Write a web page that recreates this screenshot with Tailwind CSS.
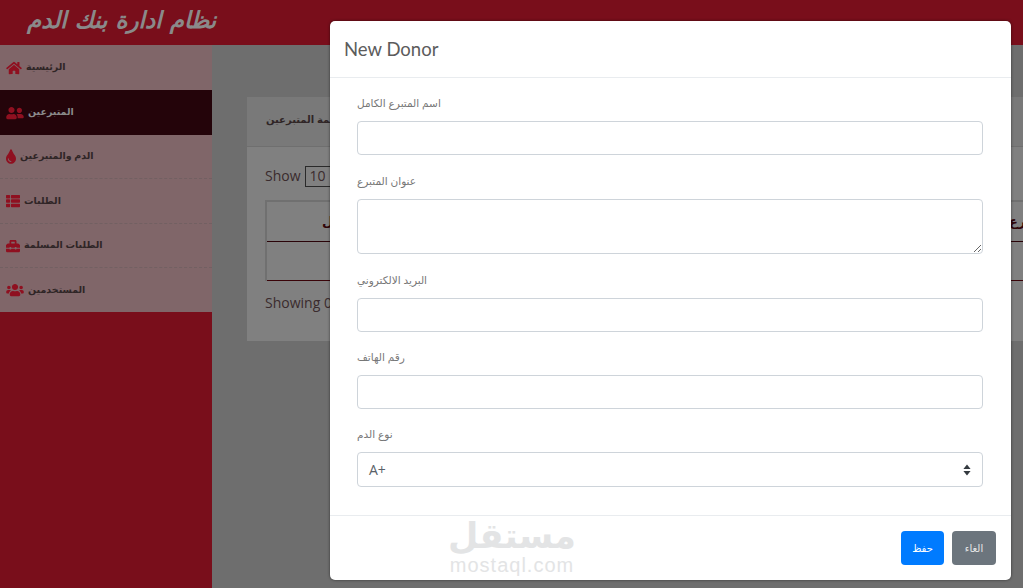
<!doctype html>
<html lang="ar">
<head>
<meta charset="utf-8">
<script src="https://cdn.jsdelivr.net/npm/@tailwindcss/browser@4"></script>
<title>نظام ادارة بنك الدم</title>
</head>
<body class="m-0">
<div class="relative w-[1023px] h-[588px] overflow-hidden bg-[#6e6e6e] font-['Open_Sans','DejaVu_Sans',sans-serif]">
  <header class="h-[45px] bg-[#790e1b] pl-[27px] flex items-center">
    <h1 class="text-[23px] leading-[40px] font-bold italic text-[#8a8a8a] font-['DejaVu_Sans',sans-serif] mb-[6px]" dir="rtl">نظام ادارة بنك الدم</h1>
  </header>
  <div class="flex h-[543px]">
    <aside class="w-[212px] shrink-0 bg-[#790e1b] self-stretch">
      <nav class="text-[9.5px] font-bold text-[#2f2526] font-['Liberation_Sans','DejaVu_Sans',sans-serif]">
        <a class="h-[45px] bg-[#806669] flex items-center gap-[4px] pl-[6px]">
          <svg class="w-[16px] h-[14px] fill-[#8f1020]" viewBox="0 0 576 512"><path d="M280.37 148.26L96 300.11V464a16 16 0 0 0 16 16l112.06-.29a16 16 0 0 0 15.92-16V368a16 16 0 0 1 16-16h64a16 16 0 0 1 16 16v95.64a16 16 0 0 0 16 16.05L464 480a16 16 0 0 0 16-16V300L295.67 148.26a12.19 12.19 0 0 0-15.3 0zM571.6 251.47L488 182.56V44.05a12 12 0 0 0-12-12h-56a12 12 0 0 0-12 12v72.61L318.47 43a48 48 0 0 0-61 0L4.34 251.47a12 12 0 0 0-1.6 16.9l25.5 31A12 12 0 0 0 45.15 301l235.22-193.74a12.19 12.19 0 0 1 15.3 0L530.9 301a12 12 0 0 0 16.9-1.6l25.5-31a12 12 0 0 0-1.7-16.93z"/></svg>
          <span dir="rtl">الرئيسية</span>
        </a>
        <a class="h-[45px] bg-[#24040a] text-[#8a8a8a] flex items-center gap-[4px] pl-[6px]">
          <svg class="w-[18px] h-[14px] fill-[#8f1020]" viewBox="0 0 640 512"><path d="M192 256c61.9 0 112-50.1 112-112S253.9 32 192 32 80 82.1 80 144s50.1 112 112 112zm76.8 32h-8.3c-20.8 10-43.9 16-68.5 16s-47.6-6-68.5-16h-8.3C51.6 288 0 339.6 0 403.2V432c0 26.5 21.5 48 48 48h288c26.5 0 48-21.5 48-48v-28.8c0-63.6-51.6-115.2-115.2-115.2zM480 256c53 0 96-43 96-96s-43-96-96-96-96 43-96 96 43 96 96 96zm48 32h-3.8c-13.9 4.8-28.6 8-44.2 8s-30.3-3.2-44.2-8H432c-20.4 0-39.2 5.9-55.7 15.4 24.4 26.3 39.7 61.2 39.7 99.8v38.4c0 2.2-.5 4.3-.6 6.4H592c26.5 0 48-21.5 48-48 0-61.9-50.1-112-112-112z"/></svg>
          <span dir="rtl">المتبرعين</span>
        </a>
        <a class="h-[44px] bg-[#806669] border-b border-dashed border-[#726062] flex items-center gap-[4px] pl-[6px]">
          <svg class="w-[10px] h-[15px] fill-[#8f1020]" viewBox="0 0 352 512"><path d="M205.22 22.09c-7.94-28.78-49.44-30.12-58.44 0C100.01 179.85 0 222.72 0 333.91 0 432.35 78.72 512 176 512s176-79.65 176-178.09c0-111.75-99.79-153.34-146.78-311.82zM176 448c-61.75 0-112-50.25-112-112 0-8.84 7.16-16 16-16s16 7.16 16 16c0 44.11 35.89 80 80 80 8.84 0 16 7.16 16 16s-7.16 16-16 16z"/></svg>
          <span dir="rtl">الدم والمتبرعين</span>
        </a>
        <a class="h-[45px] bg-[#806669] border-b border-dashed border-[#726062] flex items-center gap-[4px] pl-[6px]">
          <svg class="w-[14px] h-[14px] fill-[#8f1020]" viewBox="0 0 512 512"><path d="M149.333 216v80c0 13.255-10.745 24-24 24H24c-13.255 0-24-10.745-24-24v-80c0-13.255 10.745-24 24-24h101.333c13.255 0 24 10.745 24 24zM0 376v80c0 13.255 10.745 24 24 24h101.333c13.255 0 24-10.745 24-24v-80c0-13.255-10.745-24-24-24H24c-13.255 0-24 10.745-24 24zM125.333 32H24C10.745 32 0 42.745 0 56v80c0 13.255 10.745 24 24 24h101.333c13.255 0 24-10.745 24-24V56c0-13.255-10.745-24-24-24H24zm80 448H488c13.255 0 24-10.745 24-24v-80c0-13.255-10.745-24-24-24H205.333c-13.255 0-24 10.745-24 24v80c0 13.255 10.745 24 24 24zm-24-424v80c0 13.255 10.745 24 24 24H488c13.255 0 24-10.745 24-24V56c0-13.255-10.745-24-24-24H205.333c-13.255 0-24 10.745-24 24zm24 264H488c13.255 0 24-10.745 24-24v-80c0-13.255-10.745-24-24-24H205.333c-13.255 0-24 10.745-24 24v80c0 13.255 10.745 24 24 24z"/></svg>
          <span dir="rtl">الطلبات</span>
        </a>
        <a class="h-[44px] bg-[#806669] border-b border-dashed border-[#726062] flex items-center gap-[4px] pl-[6px]">
          <svg class="w-[14px] h-[14px] fill-[#8f1020]" viewBox="0 0 512 512"><path d="M502.63 214.63l-45.25-45.25c-6-6-14.14-9.37-22.63-9.37H384V80c0-26.51-21.49-48-48-48H176c-26.51 0-48 21.49-48 48v80H77.25c-8.49 0-16.62 3.37-22.63 9.37L9.37 214.63c-6 6-9.37 14.14-9.37 22.63V320h128v-16c0-8.84 7.16-16 16-16h32c8.84 0 16 7.16 16 16v16h128v-16c0-8.84 7.16-16 16-16h32c8.84 0 16 7.16 16 16v16h128v-82.75c0-8.48-3.37-16.62-9.37-22.62zM320 160H192V96h128v64zm64 208c0 8.84-7.16 16-16 16h-32c-8.84 0-16-7.16-16-16v-16H192v16c0 8.84-7.16 16-16 16h-32c-8.84 0-16-7.16-16-16v-16H0v96c0 17.67 14.33 32 32 32h448c17.67 0 32-14.33 32-32v-96H384v16z"/></svg>
          <span dir="rtl">الطلبات المسلمة</span>
        </a>
        <a class="h-[44px] bg-[#806669] flex items-center gap-[4px] pl-[6px]">
          <svg class="w-[18px] h-[14px] fill-[#8f1020]" viewBox="0 0 640 512"><path d="M96 224c35.3 0 64-28.7 64-64s-28.7-64-64-64-64 28.7-64 64 28.7 64 64 64zm448 0c35.3 0 64-28.7 64-64s-28.7-64-64-64-64 28.7-64 64 28.7 64 64 64zm32 32h-64c-17.6 0-33.5 7.1-45.1 18.6 40.3 22.1 68.9 62 75.1 109.4h66c17.7 0 32-14.3 32-32v-32c0-35.3-28.7-64-64-64zm-256 0c61.9 0 112-50.1 112-112S381.9 32 320 32 208 82.1 208 144s50.1 112 112 112zm76.8 32h-8.3c-20.8 10-43.9 16-68.5 16s-47.6-6-68.5-16h-8.3C179.6 288 128 339.6 128 403.2V432c0 26.5 21.5 48 48 48h288c26.5 0 48-21.5 48-48v-28.8c0-63.6-51.6-115.2-115.2-115.2zm-223.7-13.4C161.5 263.1 145.6 256 128 256H64c-35.3 0-64 28.7-64 64v32c0 17.7 14.3 32 32 32h65.9c6.3-47.4 34.9-87.3 75.2-109.4z"/></svg>
          <span dir="rtl">المستخدمين</span>
        </a>
      </nav>
    </aside>
    <main class="flex-1 min-w-0 pl-[35px] pt-[52px]">
      <section class="w-[800px] h-[244px] bg-[#808080] rounded-tl-[3px] text-[#3a2b2d] text-[14px]">
        <div class="h-[50px] bg-[#797979] border-b border-[#6f6f6f] pl-[19px] pb-[4px] flex items-center whitespace-nowrap">
          <span class="text-[10px] font-bold text-[#2f2526] font-['Liberation_Sans','DejaVu_Sans',sans-serif]" dir="rtl">قائمة المتبرعين</span>
        </div>
        <div class="pl-[18px] pt-[18px]">
          <div class="h-[22px] flex items-center gap-[4px]">
            <span class="mb-[2px]">Show</span>
            <span class="w-[40px] h-[21px] border border-[#2a2a2a] pl-[4px] leading-[18px]">10</span>
          </div>
          <div class="mt-[13px] w-[780px] border-l-2 border-t-2 border-[#707070] text-[#300408] text-[13px] font-bold font-['Liberation_Sans','DejaVu_Sans',sans-serif]">
            <div class="h-[40px] border-b border-[#2a0308] flex items-center whitespace-nowrap">
              <span class="w-[56px] pl-[55px] shrink-0" dir="ltr">الكامل</span>
              <span class="ml-[686px]" dir="rtl">المتبرع</span>
            </div>
            <div class="h-[39px] border-b border-[#3a0409]"></div>
          </div>
          <p class="mt-[11px]">Showing 0 to 0 of 0 entries</p>
        </div>
      </section>
    </main>
  </div>

  <!-- Modal over the dimmed page -->
  <div class="absolute left-[330px] top-[21px] w-[681px] h-[559px] bg-white rounded-[5px] shadow-[0_0_3px_rgba(0,0,0,0.55)] flex flex-col">
    <div class="h-[57px] border-b border-[#e9ecef] pl-[14px] pt-[2px] flex items-center">
      <h2 class="text-[18.5px] text-[#5c5c5c] font-['Lato',sans-serif]">New Donor</h2>
    </div>
    <form class="flex-1 pt-[15px] pl-[27px] pr-[28px] text-[10.5px] text-[#777] font-['Liberation_Sans','DejaVu_Sans',sans-serif]">
      <label class="block h-[20px] leading-[20px] mb-[8px]"><span dir="rtl">اسم المتبرع الكامل</span></label>
      <input class="block w-full h-[34px] border border-[#ced4da] rounded-[4px] mb-[16px]">
      <label class="block h-[20px] leading-[20px] mb-[8px]"><span dir="rtl">عنوان المتبرع</span></label>
      <textarea class="block w-full h-[55px] border border-[#ced4da] rounded-[4px] mb-[16px]"></textarea>
      <label class="block h-[20px] leading-[20px] mb-[8px]"><span dir="rtl">البريد الالكتروني</span></label>
      <input class="block w-full h-[34px] border border-[#ced4da] rounded-[4px] mb-[16px]">
      <label class="block h-[19px] leading-[19px] mb-[8px]"><span dir="rtl">رقم الهاتف</span></label>
      <input class="block w-full h-[34px] border border-[#ced4da] rounded-[4px] mb-[16px]">
      <label class="block h-[19px] leading-[19px] mb-[8px]"><span dir="rtl">نوع الدم</span></label>
      <div class="w-full h-[35px] border border-[#ced4da] rounded-[4px] pl-[11px] pr-[11px] flex items-center justify-between text-[14px] text-[#5a6168] font-['Open_Sans',sans-serif]">
        <span>A+</span>
        <svg class="w-[8px] h-[12px] fill-[#343a40]" viewBox="0 0 8 12"><path d="M4 0.5 L7.6 5 H0.4 Z M4 11.5 L0.4 7 H7.6 Z"/></svg>
      </div>
    </form>
    <div class="h-[65px] border-t border-[#e9ecef] pt-[15px] pr-[15px] flex justify-end gap-[8px] text-white text-[10px] font-['Liberation_Sans','DejaVu_Sans',sans-serif]">
      <button type="button" class="w-[43px] h-[34px] bg-[#007bff] rounded-[4px]">حفظ</button>
      <button type="button" class="w-[44px] h-[34px] bg-[#6c757d] rounded-[4px] text-[#e8e8e8]">الغاء</button>
    </div>
    <div class="absolute left-[120px] top-[495px] w-[124px] flex flex-col items-center text-[#e3e4e5] pointer-events-none">
      <span class="text-[35px] leading-[38px] font-black font-['Noto_Sans','DejaVu_Sans',sans-serif]" dir="rtl">مستقل</span>
      <span class="text-[20px] leading-[22px] font-['Liberation_Sans',sans-serif] tracking-[1px] whitespace-nowrap">mostaql.com</span>
    </div>
  </div>
</div>
</body>
</html>
